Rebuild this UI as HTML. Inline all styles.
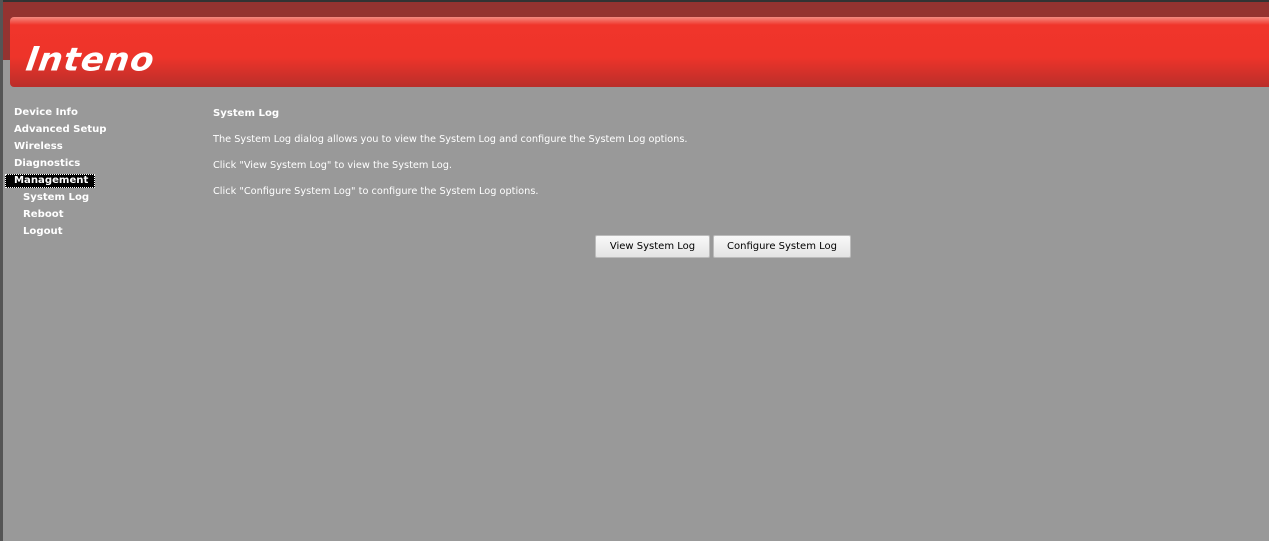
<!DOCTYPE html>
<html><head><style>
body{margin:0;width:1269px;height:541px;background:#999;position:relative;overflow:hidden;font-family:"DejaVu Sans",sans-serif;color:#fff}
#top{position:absolute;left:0;top:0;width:1269px;height:58px;background:#943330;border-top:2px solid #333}
#lb{position:absolute;left:0;top:0;width:3px;height:541px;background:#555}
#ban{position:absolute;left:10px;top:17px;width:1259px;height:70px;border-radius:4px 0 0 4px;background:linear-gradient(#f58a80 0,#f0352b 8px,#ee342a 40px,#ba2e2a 70px)}
#logo{position:absolute;left:26px;top:40px;font:italic bold 34px "DejaVu Sans",sans-serif;letter-spacing:1px;color:#fff;transform:skewX(-8deg) scaleY(0.95)}
.m{position:absolute;left:14px;font-size:10.1px;font-weight:bold}
.s{left:23px}
.sel{left:5px;top:174px;background:#000;border:1px dotted #fff;width:80px;padding-left:8px;height:12px;line-height:12px}
.t{position:absolute;left:213px;font-size:9.75px}
.b{position:absolute;top:235px;height:21px;background:linear-gradient(#f8f8f8,#e4e4e4);border:1px solid #bbb;border-radius:2px;font-size:10px;color:#000;text-align:center;line-height:21px}
</style></head><body>
<div id="top"></div><div id="lb"></div>
<div id="ban"></div><div id="logo">lnteno</div>
<div class="m" style="top:107px">Device Info</div>
<div class="m" style="top:124px">Advanced Setup</div>
<div class="m" style="top:141px">Wireless</div>
<div class="m" style="top:158px">Diagnostics</div>
<div class="m sel">Management</div>
<div class="m s" style="top:192px">System Log</div>
<div class="m s" style="top:209px">Reboot</div>
<div class="m s" style="top:226px">Logout</div>
<div class="t" style="top:108px;font-weight:bold;font-size:10.1px">System Log</div>
<div class="t" style="top:134px">The System Log dialog allows you to view the System Log and configure the System Log options.</div>
<div class="t" style="top:160px">Click "View System Log" to view the System Log.</div>
<div class="t" style="top:186px">Click "Configure System Log" to configure the System Log options.</div>
<div class="b" style="left:595px;width:113px">View System Log</div>
<div class="b" style="left:713px;width:136px">Configure System Log</div>
</body></html>
